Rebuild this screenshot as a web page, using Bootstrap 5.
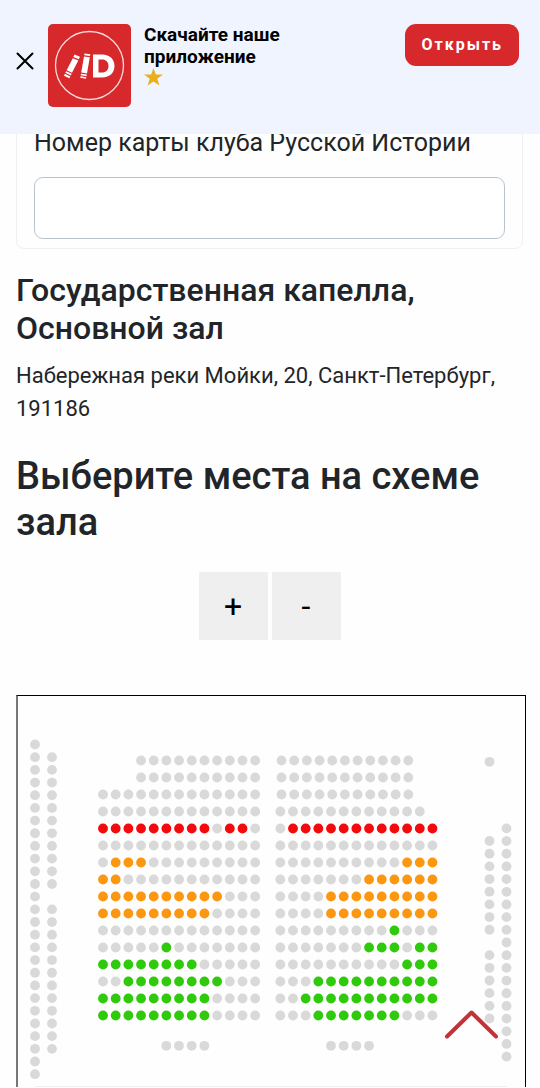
<!DOCTYPE html>
<html lang="ru">
<head>
<meta charset="utf-8">
<meta name="viewport" content="width=device-width, initial-scale=1">
<title>Государственная капелла — выбор мест</title>
<link href="https://cdn.jsdelivr.net/npm/bootstrap@5.3.0/dist/css/bootstrap.min.css" rel="stylesheet">
<style>
  body { font-family: Roboto, "Liberation Sans", sans-serif; color: #212529; background: #fefefe; }
  .app-banner { height: 134px; padding: 24px 21px 0 16px; background: #f0f4fe; color: #000; }
  .banner-close { width: 18px; height: 18px; margin-top: 28px; line-height: 0; }
  .app-logo { width: 83px; height: 83px; margin: 0 13px 0 14px; }
  .banner-title { font-size: 19px; line-height: 22px; font-weight: 700; }
  .banner-open { --bs-btn-color: #fff; --bs-btn-bg: #d7282c; --bs-btn-hover-color: #fff; --bs-btn-hover-bg: #b91f23;
    height: 42px; padding: 0 16px; border: 0; border-radius: 11px; font-size: 16px; font-weight: 700; letter-spacing: 2px; }
  .page { padding: 111px 17px 0 16px; }
  .club-card { padding: 12px 17px 9px; border: 1px solid #eff0f1; border-radius: 8px; background: #fefefe; }
  .club-card .form-label { font-size: 25px; line-height: 38px; margin-bottom: 15px; }
  .club-card .form-control { height: 62px; border-color: #b9c5cb; border-radius: 9px; font-size: 25px; }
  .venue-name { font-size: 32px; line-height: 38px; margin: 22px 0 12px; }
  .venue-address { font-size: 22px; line-height: 33px; margin-bottom: 28px; }
  .pick-title { font-size: 38px; line-height: 46px; margin-bottom: 27px; }
  .zoom-btn { width: 69px; height: 68px; border: 0; background: #efefef; color: #000; font-size: 32px; font-weight: 400; }
  .hall { margin: 55px -3px 0 0; border: 1px solid #000; border-bottom: 0; border-left: 2px solid #777; }
  .to-top { right: 42px; bottom: 48px; line-height: 0; }
</style>
</head>
<body>
<header class="app-banner fixed-top d-flex align-items-start">
  <button type="button" class="banner-close btn p-0 border-0" aria-label="Закрыть">
    <svg width="18" height="18" viewBox="0 0 18 18"><path d="M1.5 1.500 16.500 16.500M16.500 1.500 1.500 16.500" stroke="#000" stroke-width="2" stroke-linecap="round"/></svg>
  </button>
  <svg class="app-logo flex-shrink-0" viewBox="0 0 83 83" aria-hidden="true">
    <rect width="83" height="83" rx="5" fill="#d7282c"/>
    <circle cx="41.500" cy="41.500" r="34" fill="none" stroke="#fbdcdc" stroke-width="1.300"/>
    <g fill="#fff">
      <path d="M26.500 30.500 32 32.800 30.800 35.300 25.300 33zM24.800 34.200 30.300 36.500 24 48.800 18.700 46.200zM18.200 47.200 23.600 49.800 22.900 51.400 17.400 48.800zM16.900 49.800 22.300 52.400 21.300 54.200 16 51.700z"/>
      <path d="M36.500 29.500 42.300 30.300 42 32 36.200 31.200zM36 32.400 41.800 33.200 39 49.500 33.200 48.600zM33 49.700 38.800 50.600 38.500 52.200 32.700 51.300zM32.500 52.300 38.300 53.200 38 54.700 32.200 53.800z"/>
      <path fill-rule="evenodd" d="M45 30.500H54C62 30.500 66.500 35.500 66.500 42S62 53.500 54 53.500H45zM50.500 35.500V48.500H54C58 48.500 60.500 46 60.500 42S58 35.500 54 35.500z"/>
    </g>
  </svg>
  <div class="flex-grow-1">
    <div class="banner-title">Скачайте наше<br>приложение</div>
    <svg class="d-block" width="19" height="18" viewBox="0 0 19 18" role="img" aria-label="Оценка: 1 звезда"><path fill="#e9b01c" d="M9.500 0 11.800 6.500H19L13.300 10.700 15.400 17.500 9.500 13.400 3.600 17.500 5.700 10.700 0 6.500H7.200z"/></svg>
  </div>
  <button type="button" class="banner-open btn">Открыть</button>
</header>

<main class="page">
  <div class="club-card">
    <label class="form-label d-block" for="club">Номер карты клуба Русской Истории</label>
    <input class="form-control" type="text" id="club">
  </div>
  <h2 class="venue-name">Государственная капелла, Основной зал</h2>
  <p class="venue-address">Набережная реки Мойки, 20, Санкт-Петербург, 191186</p>
  <h1 class="pick-title">Выберите места на схеме зала</h1>
  <div class="d-flex justify-content-center gap-1">
    <button type="button" class="zoom-btn">+</button>
    <button type="button" class="zoom-btn">-</button>
  </div>
  <div class="hall">
    <svg class="d-block w-100" id="seats" viewBox="18 696 507 391" role="img" aria-label="Схема зала"></svg>
  </div>
</main>

<a class="to-top position-fixed" href="#" aria-label="Наверх">
  <svg width="54" height="30" viewBox="0 0 54 30"><path d="M3 26.500 27.500 2.500 52 26.500" fill="none" stroke="#b9141b" stroke-opacity=".87" stroke-width="4" stroke-linecap="round" stroke-linejoin="round"/></svg>
</a>

<script src="https://cdn.jsdelivr.net/npm/bootstrap@5.3.0/dist/js/bootstrap.bundle.min.js"></script>
<script>
  // x: taken, r / o / g: price groups, dot: no seat
  const colors = { x: '#d9d9d9', r: '#f20a0c', o: '#fb9711', g: '#2fca0b' };
  const step = 12.68;
  const stalls = [
    ['...xxxxxxxxxx', 'xxxxxxxxxxx'],
    ['...xxxxxxxxxx', 'xxxxxxxxxxx'],
    ['xxxxxxxxxxxxx', 'xxxxxxxxxxx'],
    ['xxxxxxxxxxxxx', 'xxxxxxxxxxxx'],
    ['rrrrrrrrrxrrx', 'xrrrrrrrrrrrr'],
    ['xxxxxxxxxxxxx', 'xxxxxxxxxxxxx'],
    ['xoooxxxxxxxxx', 'xxxxxxxxxxooo'],
    ['ooxxxxxxxxxxx', 'xxxxxxxoooooo'],
    ['ooooooooooxxx', 'xxxxooooooooo'],
    ['oooooooooxxxx', 'xxxxooooooooo'],
    ['xxxxxxxxxxxxx', 'xxxxxxxxxgxxx'],
    ['xxxxxgxxxxxxx', 'xxxxxxxgggxgg'],
    ['ggggggggxxxxx', 'xxxxxxxxxxggg'],
    ['xxggggggggxxx', 'xxxgggggggggg'],
    ['gggggggggxxxx', 'xxggggggggggg'],
    ['gggggggggxxxx', 'xxxgggggggxxx']
  ];
  let dots = '';
  const line = (seats, x, y, vertical) => [...seats].forEach((s, i) => {
    if (s === '.') return;
    const cx = vertical ? x : x + i * step, cy = vertical ? y + i * step : y;
    dots += `<circle cx="${cx}" cy="${cy}" r="4.900" fill="${colors[s]}"/>`;
  });
  stalls.forEach(([left, right], i) => {
    const y = 760.5 + i * 17;
    line(left, 103, y);
    line(right, i < 3 ? 281.5 : 280.3, y);
  });
  line('xxxx', 166.3, 1045.8);
  line('xxxx', 331, 1045.8);
  line('x'.repeat(27), 35, 744.5, true);
  line('x'.repeat(11) + '.' + 'x'.repeat(12), 52, 757.2, true);
  line('x', 489.5, 761.8, true);
  line('x'.repeat(8) + '.' + 'x'.repeat(6), 489.5, 841, true);
  line('x'.repeat(19), 506.5, 828.4, true);
  document.getElementById('seats').innerHTML = dots + '<path d="M35 1086.500H507" stroke="#f0f0f0"/>';
</script>
</body>
</html>
